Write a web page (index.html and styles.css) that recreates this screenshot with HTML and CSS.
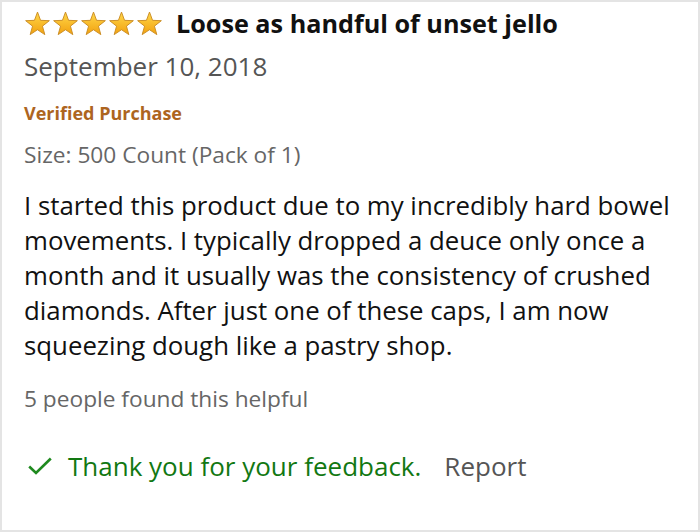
FILE: index.html
```html
<!DOCTYPE html>
<html>
<head>
<meta charset="utf-8">
<link rel="stylesheet" href="styles.css">
</head>
<body>
<div class="card">
  <div class="title-row">
    <div class="stars">
      <svg class="star" viewBox="0 0 26 24"><defs><linearGradient id="g" x1="0" y1="0" x2="0" y2="1"><stop offset="0" stop-color="#ffd84a"/><stop offset="1" stop-color="#f2a10f"/></linearGradient></defs><path d="M13 1L15.94 8.95L24.41 9.29L17.76 14.55L20.05 22.71L13 18L5.95 22.71L8.24 14.55L1.59 9.29L10.06 8.95Z" fill="url(#g)" stroke="#c98b22" stroke-width="0.9" stroke-linejoin="round"/></svg>
      <svg class="star" viewBox="0 0 26 24"><path d="M13 1L15.94 8.95L24.41 9.29L17.76 14.55L20.05 22.71L13 18L5.95 22.71L8.24 14.55L1.59 9.29L10.06 8.95Z" fill="url(#g)" stroke="#c98b22" stroke-width="0.9" stroke-linejoin="round"/></svg>
      <svg class="star" viewBox="0 0 26 24"><path d="M13 1L15.94 8.95L24.41 9.29L17.76 14.55L20.05 22.71L13 18L5.95 22.71L8.24 14.55L1.59 9.29L10.06 8.95Z" fill="url(#g)" stroke="#c98b22" stroke-width="0.9" stroke-linejoin="round"/></svg>
      <svg class="star" viewBox="0 0 26 24"><path d="M13 1L15.94 8.95L24.41 9.29L17.76 14.55L20.05 22.71L13 18L5.95 22.71L8.24 14.55L1.59 9.29L10.06 8.95Z" fill="url(#g)" stroke="#c98b22" stroke-width="0.9" stroke-linejoin="round"/></svg>
      <svg class="star" viewBox="0 0 26 24"><path d="M13 1L15.94 8.95L24.41 9.29L17.76 14.55L20.05 22.71L13 18L5.95 22.71L8.24 14.55L1.59 9.29L10.06 8.95Z" fill="url(#g)" stroke="#c98b22" stroke-width="0.9" stroke-linejoin="round"/></svg>
    </div>
    <h1 class="title">Loose as handful of unset jello</h1>
  </div>
  <div class="date">September 10, 2018</div>
  <div class="verified">Verified Purchase</div>
  <div class="size">Size: 500 Count (Pack of 1)</div>
  <p class="body">I started this product due to my incredibly hard bowel<br>movements. I typically dropped a deuce only once a<br>month and it usually was the consistency of crushed<br>diamonds. After just one of these caps, I am now<br>squeezing dough like a pastry shop.</p>
  <div class="helpful">5 people found this helpful</div>
  <div class="feedback-row">
    <svg class="check" viewBox="0 0 24 18"><path d="M1.2 9.5L8 16L22.8 1.5" fill="none" stroke="#1f8a1f" stroke-width="2.6"/></svg>
    <span class="thanks">Thank you for your feedback.</span>
    <span class="report">Report</span>
  </div>
</div>
</body>
</html>
```
FILE: styles.css
```css
html, body {
  margin: 0;
  padding: 0;
  background: #fff;
}
.card {
  box-sizing: border-box;
  width: 700px;
  height: 532px;
  border: 2px solid #e4e4e4;
  padding: 5px 0 0 22px;
  font-family: "Open Sans", sans-serif;
  color: #111;
}
.title-row {
  display: flex;
  align-items: center;
  gap: 13px;
  height: 32px;
}
.stars {
  display: flex;
  gap: 1px;
}
.star {
  width: 27px;
  height: 25px;
  display: block;
}
.title {
  margin: 0;
  font-size: 25.2px;
  line-height: 32px;
  font-weight: 700;
  color: #111;
}
.date {
  margin-top: 10px;
  font-size: 26px;
  line-height: 34px;
  color: #555;
}
.verified {
  margin-top: 17px;
  font-size: 18px;
  line-height: 26px;
  font-weight: 700;
  color: #ad651f;
}
.size {
  margin-top: 14px;
  font-size: 22.7px;
  line-height: 30px;
  color: #666;
}
.body {
  margin: 18px 0 0 0;
  font-size: 25.8px;
  line-height: 35px;
  color: #111;
}
.helpful {
  margin-top: 21px;
  font-size: 22.7px;
  line-height: 30px;
  color: #666;
}
.feedback-row {
  margin-top: 35px;
  display: flex;
  align-items: center;
  font-size: 26px;
  line-height: 34px;
}
.check {
  width: 24px;
  height: 18px;
  margin: 0 16px 0 4px;
  display: block;
}
.thanks {
  color: #127812;
}
.report {
  margin-left: 23px;
  color: #555;
}
```
